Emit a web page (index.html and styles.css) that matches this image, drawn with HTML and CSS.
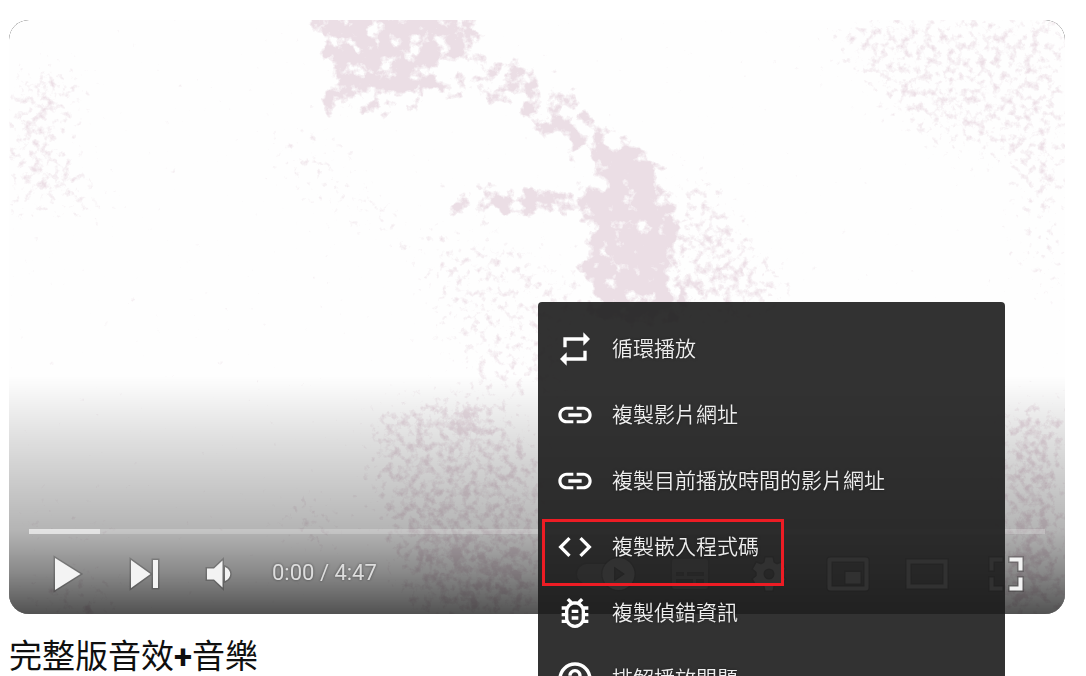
FILE: index.html
```html
<!DOCTYPE html>
<html lang="zh-Hant">
<head>
<meta charset="utf-8">
<meta name="viewport" content="width=device-width, initial-scale=1">
<title>完整版音效+音樂</title>
<link rel="stylesheet" href="styles.css">
</head>
<body>
<main class="page">
  <section class="player" aria-label="影片播放器">
    <div class="screen">
      <svg class="frame" viewBox="0 0 1056 594" preserveAspectRatio="xMidYMid slice" aria-hidden="true">
        <defs>
          <filter id="grain" filterUnits="userSpaceOnUse" x="0" y="0" width="1056" height="594" color-interpolation-filters="sRGB">
            <feGaussianBlur in="SourceAlpha" stdDeviation="9" result="b"/>
            <feTurbulence type="fractalNoise" baseFrequency="0.07" numOctaves="5" seed="8" result="n"/>
            <feComposite in="b" in2="n" operator="arithmetic" k1="0" k2="1.3" k3="1.9" k4="-1.65"/>
            <feComponentTransfer result="m"><feFuncA type="linear" slope="3"/></feComponentTransfer>
            <feFlood flood-color="#ebdee5"/>
            <feComposite in2="m" operator="in"/>
            <feGaussianBlur stdDeviation=".5"/>
          </filter>
          <filter id="dust" filterUnits="userSpaceOnUse" x="0" y="0" width="1056" height="594" color-interpolation-filters="sRGB">
            <feGaussianBlur in="SourceAlpha" stdDeviation="14" result="b"/>
            <feTurbulence type="fractalNoise" baseFrequency="0.13" numOctaves="4" seed="3" result="n"/>
            <feComposite in="b" in2="n" operator="arithmetic" k1="0" k2="1" k3="1.8" k4="-1.45"/>
            <feComponentTransfer result="m"><feFuncA type="linear" slope="1.600"/></feComponentTransfer>
            <feFlood flood-color="#ecdfe6"/>
            <feComposite in2="m" operator="in"/>
            <feGaussianBlur stdDeviation=".7"/>
          </filter>
        </defs>
        <g filter="url(#dust)">
          <path opacity=".65" d="M0 50L50 46 80 60 68 105 50 125 100 185 85 200 40 175 25 200 0 200Z"/>
          <path opacity=".6" d="M850 -10H1060V190L1020 170 990 140 940 130 880 100 850 50 810 30Z"/>
          <path opacity=".4" d="M265 110H330L350 160 410 200 350 220 270 150Z"/>
          <path opacity=".5" d="M400 215L500 215 580 260 560 380H480L440 330Z"/>
          <path opacity=".65" d="M680 130L730 200 790 280 760 300H680L670 180Z"/>
          <path opacity=".7" d="M355 390L470 370 535 430 540 594H400L370 500Z"/>
          <path opacity=".8" d="M990 390L1056 380V594H990Z"/>
          <path opacity=".5" d="M265 490L310 470 340 500 330 530 270 520ZM20 555L90 550 130 594H20ZM10 495L110 500V515H10Z"/>
          <path opacity=".4" d="M1000 170L1056 150V290L1010 260Z"/>
        </g>
        <g filter="url(#grain)">
          <path opacity=".85" d="M292 -20H460L480 20 440 45 410 65 375 60 350 75 318 65 312 30Z"/>
          <path opacity=".68" d="M280 90L330 65 440 60 480 30 530 50 585 90 610 110 640 130 625 175 590 150 550 130 520 110 500 85 430 75 400 95Z"/>
          <path opacity=".95" d="M600 135L632 120 655 150 665 190 665 270 680 305H590L570 250 582 210 570 180Z"/>
          <path opacity=".8" d="M420 188L450 172 520 160 565 170 590 185 580 205 530 195 450 200Z"/>
          <path opacity=".6" d="M365 200L400 215 440 238 420 245 385 225Z"/>
          <path opacity=".45" d="M660 190L700 200 740 260 740 290H660Z"/>
          <path opacity=".75" d="M435 385H475L480 410 455 420 435 405ZM395 390H425L430 405 400 405Z"/>
          <path opacity=".5" d="M405 480L470 500 530 520 530 594H440L400 520ZM50 570H100V594H50ZM1000 490L1040 500 1030 594H990Z"/>
        </g>
      </svg>
      <div class="shade"></div>
      <div class="chrome">
        <div class="track" role="progressbar" aria-label="播放進度" aria-valuenow="0"><div class="loaded"></div></div>
        <div class="controls">
          <button class="ctl" type="button" aria-label="播放"><svg viewBox="-22 -22 44 44"><path d="M-12-16L13.500 0-12 16Z"/></svg></button>
          <button class="ctl" type="button" aria-label="下一部"><svg viewBox="-22 -22 44 44"><path d="M-12-14L7.500 0-12 14ZM10-14H15V14H10Z"/></svg></button>
          <button class="ctl" type="button" aria-label="靜音"><svg viewBox="-22 -22 44 44"><path d="M-12-5.500H-5L3.500-13.500V13.500L-5 5.500H-12ZM6-7C13-4 13 4 6 7Z"/></svg></button>
          <span class="time">0:00 / 4:47</span>
          <span class="spacer"></span>
          <button class="ctl wide" type="button" aria-label="自動播放"><svg viewBox="-22 -22 44 44"><path opacity=".5" d="M-24-10H-4A17 17 0 0 0-4 10H-24A10 10 0 0 1-24-10Z"/><path fill-rule="evenodd" d="M7.500-16A16 16 0 1 1 7.500 16A16 16 0 1 1 7.500-16ZM3-7.500V7.500L14 0Z"/></svg></button>
          <button class="ctl wide" type="button" aria-label="字幕"><svg class="faint" viewBox="-22 -22 44 44"><path fill-rule="evenodd" d="M-15-15H15Q18-15 18-12V12Q18 15 15 15H-15Q-18 15-18 12V-12Q-18-15-15-15ZM-14-2V2H-6V-2ZM-3-2V2H14V-2ZM-14 5V9H3V5ZM6 5V9H14V5Z"/></svg></button>
          <button class="ctl wide" type="button" aria-label="設定"><svg viewBox="-22 -22 44 44"><path fill-rule="evenodd" d="M-3.500-16.500H3.500L4.500-11.500 8-9.500 12.500-11.300 16-5 12.300-2V2L16 5 12.500 11.300 8 9.500 4.500 11.500 3.500 16.500H-3.500L-4.500 11.500-8 9.500-12.500 11.300-16 5-12.300 2V-2L-16-5-12.500-11.300-8-9.500-4.500-11.500ZM0-5.500A5.500 5.500 0 1 0 0 5.500A5.500 5.500 0 1 0 0-5.500Z"/></svg></button>
          <button class="ctl wide" type="button" aria-label="迷你播放器"><svg viewBox="-22 -22 44 44"><path fill-rule="evenodd" d="M-17.500-16.500H17.500Q20.500-16.500 20.500-13.500V13.500Q20.500 16.500 17.500 16.500H-17.500Q-20.500 16.500-20.500 13.500V-13.500Q-20.500-16.500-17.500-16.500ZM-16.500-12.500V12.500H16.500V-12.500ZM-2.500-2H12.500V9.500H-2.500Z"/></svg></button>
          <button class="ctl wide" type="button" aria-label="劇院模式"><svg viewBox="-22 -22 44 44"><path fill-rule="evenodd" d="M-20.500-14.500H20.500V14.500H-20.500ZM-16.500-10.500V10.500H16.500V-10.500Z"/></svg></button>
          <button class="ctl wide" type="button" aria-label="全螢幕"><svg viewBox="-22 -22 44 44"><path d="M-16.500-16.500H-3.500V-12.500H-12.500V-3.500H-16.500ZM3.500-16.500H16.500V-3.500H12.500V-12.500H3.500ZM-16.500 3.500H-12.500V12.500H-3.500V16.500H-16.500ZM12.500 3.500H16.500V16.500H3.500V12.500H12.500Z"/></svg></button>
        </div>
      </div>
    </div>

    <div class="menu" role="menu">
      <button class="item" type="button" role="menuitem"><svg viewBox="0 0 24 24"><path d="M7 7h10v3l4-4-4-4v3H5v6h2V7zm10 10H7v-3l-4 4 4 4v-3h12v-6h-2v4z"/></svg><span class="label">循環播放</span></button>
      <button class="item" type="button" role="menuitem"><svg viewBox="0 0 24 24"><path d="M3.900 12c0-1.710 1.390-3.100 3.100-3.100h4V7H7c-2.760 0-5 2.240-5 5s2.240 5 5 5h4v-1.900H7c-1.710 0-3.100-1.390-3.100-3.100zM8 13h8v-2H8v2zm9-6h-4v1.900h4c1.710 0 3.100 1.390 3.100 3.100s-1.390 3.100-3.100 3.100h-4V17h4c2.760 0 5-2.240 5-5s-2.240-5-5-5z"/></svg><span class="label">複製影片網址</span></button>
      <button class="item" type="button" role="menuitem"><svg viewBox="0 0 24 24"><path d="M3.900 12c0-1.710 1.390-3.100 3.100-3.100h4V7H7c-2.760 0-5 2.240-5 5s2.240 5 5 5h4v-1.900H7c-1.710 0-3.100-1.390-3.100-3.100zM8 13h8v-2H8v2zm9-6h-4v1.900h4c1.710 0 3.100 1.390 3.100 3.100s-1.390 3.100-3.100 3.100h-4V17h4c2.760 0 5-2.240 5-5s-2.240-5-5-5z"/></svg><span class="label">複製目前播放時間的影片網址</span></button>
      <button class="item marked" type="button" role="menuitem"><svg viewBox="0 0 24 24"><path d="M9.400 16.600L4.800 12l4.600-4.600L8 6l-6 6 6 6 1.400-1.400zm5.200 0l4.600-4.600-4.600-4.600L16 6l6 6-6 6-1.400-1.400z"/></svg><span class="label">複製嵌入程式碼</span></button>
      <button class="item" type="button" role="menuitem"><svg viewBox="0 0 24 24"><path d="M20 8h-2.810c-.45-.78-1.070-1.450-1.820-1.960L17 4.410 15.590 3l-2.170 2.170C12.960 5.060 12.490 5 12 5s-.96.06-1.410.17L8.410 3 7 4.410l1.620 1.630C7.880 6.550 7.260 7.220 6.810 8H4v2h2.090c-.05.33-.09.66-.09 1v1H4v2h2v1c0 .34.04.67.09 1H4v2h2.810c1.040 1.790 2.970 3 5.190 3s4.150-1.210 5.190-3H20v-2h-2.090c.05-.33.09-.66.09-1v-1h2v-2h-2v-1c0-.34-.04-.67-.09-1H20V8zm-4 4v3c0 .22-.03.47-.07.7l-.1.65-.37.65c-.72 1.240-2.040 2-3.460 2s-2.740-.77-3.460-2l-.37-.64-.1-.65C8.030 15.480 8 15.230 8 15v-4c0-.23.03-.48.07-.7l.1-.65.37-.65c.3-.52.72-.97 1.210-1.310l.57-.39.74-.18c.31-.08.63-.12.94-.12.32 0 .63.04.95.12l.68.16.61.42c.5.34.91.78 1.210 1.310l.38.65.1.65c.04.22.07.47.07.69v1zm-6 2h4v2h-4v-2zm0-4h4v2h-4v-2z"/></svg><span class="label">複製偵錯資訊</span></button>
      <button class="item" type="button" role="menuitem"><svg viewBox="0 0 24 24"><path d="M11 18h2v-2h-2v2zm1-16C6.480 2 2 6.480 2 12s4.480 10 10 10 10-4.480 10-10S17.520 2 12 2zm0 18c-4.410 0-8-3.590-8-8s3.590-8 8-8 8 3.590 8 8-3.590 8-8 8zm0-14c-2.210 0-4 1.790-4 4h2c0-1.100.9-2 2-2s2 .9 2 2c0 2-3 1.750-3 5h2c0-2.250 3-2.500 3-5 0-2.210-1.790-4-4-4z"/></svg><span class="label">排解播放問題</span></button>
    </div>
  </section>
  <h1 class="title">完整版音效<b>+</b>音樂</h1>
</main>
</body>
</html>
```
FILE: styles.css
```css
*,
*::after {
  box-sizing: border-box;
}

body {
  margin: 0;
  background: #fff;
  font-family: Roboto, "Noto Sans CJK TC", sans-serif;
}

.page {
  height: 100vh;
  overflow: hidden;
  padding: 20px 21px 0 9px;
}

.player {
  position: relative;
}

.screen {
  position: relative;
  aspect-ratio: 16 / 9;
  border-radius: 20px;
  overflow: hidden;
  background: #000;
}

.frame,
.shade {
  position: absolute;
  inset: 0;
  width: 100%;
  height: 100%;
}

.frame {
  background: #fefefe;
}

.shade {
  background: linear-gradient(to bottom,
    rgba(0, 0, 0, 0) 60%,
    rgba(0, 0, 0, .15) 73%,
    rgba(0, 0, 0, .29) 86%,
    rgba(0, 0, 0, .46) 93%,
    rgba(0, 0, 0, .68) 100%);
}

.chrome {
  position: absolute;
  inset: auto 20px 0;
}

.track {
  height: 5px;
  background: rgba(255, 255, 255, .22);
}

.loaded {
  width: 7%;
  height: 100%;
  background: rgba(255, 255, 255, .5);
}

.controls {
  display: flex;
  align-items: center;
  height: 80px;
}

.ctl {
  display: flex;
  flex: none;
  align-items: center;
  justify-content: center;
  width: 76px;
  height: 80px;
  padding: 0;
  border: 0;
  background: none;
}

.wide {
  width: 79px;
}

.ctl svg {
  width: 44px;
  height: 44px;
  overflow: visible;
  fill: #f3f3f3;
  stroke: rgba(0, 0, 0, .2);
  stroke-width: 3px;
  paint-order: stroke;
}

.ctl .faint {
  opacity: .5;
}

.time {
  padding-left: 15px;
  padding-bottom: 2px;
  font-size: 22px;
  line-height: 30px;
  color: #ddd;
  text-shadow: 0 0 3px rgba(0, 0, 0, .5);
  white-space: nowrap;
}

.spacer {
  flex: 1;
}

.menu {
  position: absolute;
  top: 282px;
  right: 60px;
  width: 467px;
  padding: 14px 0;
  border-radius: 4px;
  background: rgba(28, 28, 28, .9);
}

.item {
  position: relative;
  display: flex;
  align-items: center;
  gap: 17px;
  width: 100%;
  height: 66px;
  padding: 0 17px;
  border: 0;
  background: none;
  color: #eee;
  font: 350 21px/30px "Noto Sans CJK TC", sans-serif;
  text-align: left;
  text-shadow: 0 0 3px rgba(0, 0, 0, .5);
}

.label {
  padding-bottom: 4px;
}

.item svg {
  flex: none;
  width: 40px;
  height: 40px;
  fill: #fff;
}

.marked::after {
  content: "";
  position: absolute;
  top: 5px;
  left: 4px;
  width: 242px;
  height: 67px;
  border: 3px solid #ed1c24;
}

.title {
  margin: 20px 0 0;
  color: #0f0f0f;
  font-size: 33px;
  font-weight: 400;
  line-height: 46px;
}
```
